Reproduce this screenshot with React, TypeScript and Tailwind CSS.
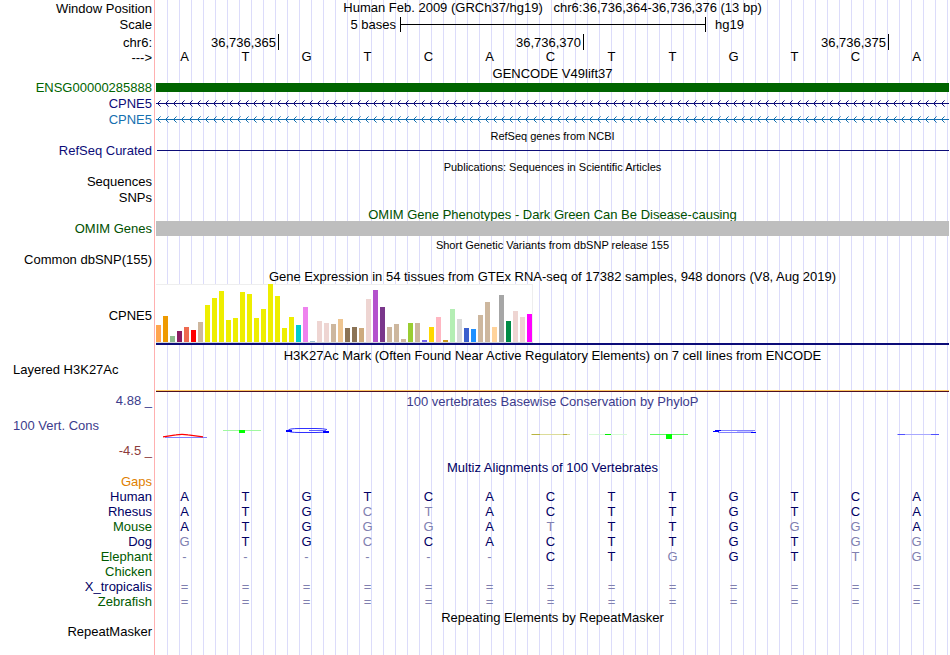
import type { ReactNode } from 'react'

type Bar = [height: number, color: string]

const SEQUENCE = 'ATGTCACTTGTCA'

// GTEx median expression per tissue, in px
const GTEX_BARS: Bar[] = [
  [17, '#ffa54f'], [26, '#ee9a00'], [6, '#8fbc8f'], [11, '#8b1c62'], [15, '#ee6a50'], [12, '#ff0000'],
  [20, '#cdb79e'], [37, '#eeee00'], [44, '#eeee00'], [51, '#eeee00'], [22, '#eeee00'], [24, '#eeee00'],
  [50, '#eeee00'], [48, '#eeee00'], [24, '#eeee00'], [33, '#eeee00'], [58, '#eeee00'], [46, '#eeee00'],
  [14, '#eeee00'], [25, '#eeee00'], [17, '#00cdcd'], [35, '#ee82ee'], [1, '#9ac0cd'], [21, '#eed5d2'],
  [19, '#eed5d2'], [18, '#cdb79e'], [23, '#eec591'], [14, '#8b7355'], [15, '#8b7355'], [14, '#cdaa7d'],
  [43, '#eed5d2'], [52, '#b452cd'], [35, '#7a378b'], [15, '#cdb79e'], [18, '#cdb79e'], [3, '#cdb79e'],
  [19, '#9acd32'], [19, '#cdb79e'], [2, '#7a67ee'], [15, '#ffd700'], [25, '#ffb6c1'], [2, '#cd9b1d'],
  [33, '#b4eeb4'], [23, '#d9d9d9'], [14, '#3a5fcd'], [13, '#1e90ff'], [27, '#cdb79e'], [40, '#cdb79e'],
  [15, '#ffd39b'], [47, '#a6a6a6'], [21, '#008b45'], [31, '#eed5d2'], [25, '#eed5d2'], [28, '#ff00ff'],
]

// lower case = differs from the human base
const ALIGNMENTS = [
  { name: 'Gaps', color: 'text-[#e08000]', bases: '' },
  { name: 'Human', color: 'text-[#000064]', bases: 'ATGTCACTTGTCA' },
  { name: 'Rhesus', color: 'text-[#000064]', bases: 'ATGctACTTGTCA' },
  { name: 'Mouse', color: 'text-[#005a00]', bases: 'ATGggAtTTGggA' },
  { name: 'Dog', color: 'text-[#000064]', bases: 'gTGcCACTTGTgg' },
  { name: 'Elephant', color: 'text-[#005a00]', bases: '------CTgGTtg' },
  { name: 'Chicken', color: 'text-[#005a00]', bases: '' },
  { name: 'X_tropicalis', color: 'text-[#000064]', bases: '=============' },
  { name: 'Zebrafish', color: 'text-[#005a00]', bases: '=============' },
]

// conservation logo glyphs, one entry per base
const LOGO: ReactNode[] = [
  <>
    <path d="M9 13.5H51" stroke="#8080ff" />
    <path d="M7 12.8L20 10.9Q26 9.8 32 10.9L47 12.8" stroke="#ff0000" strokeWidth="1.3" />
  </>,
  <>
    <path d="M6 6.5H44" stroke="#a0f8a0" />
    <path d="M22 6h6v3h-6z" fill="#00ff00" />
  </>,
  <>
    <path d="M49 5.5Q46 4.5 38 4.5H22Q10 4.5 10 6.5Q10 8.5 22 8.5H38Q46 8.5 49 7.5" stroke="#3030ff" />
    <path d="M31 6.5H48" stroke="#6060ff" />
    <path d="M8 6h6v2h-6zM45 7h6v2h-6z" fill="#0000ff" />
  </>,
  null,
  null,
  null,
  <>
    <path d="M9 10.5H48" stroke="#dcdc98" />
    <path d="M10 10.5H18M41 10.5H45" stroke="#b8b440" />
  </>,
  <>
    <path d="M6 10.5H44" stroke="#d8fad8" />
    <path d="M22 10.5H28" stroke="#00ee00" />
  </>,
  <>
    <path d="M6 10.5H44" stroke="#60f860" />
    <path d="M22 10h6v5h-6z" fill="#00ff00" />
  </>,
  <>
    <path d="M13 6.5H50M13 8.5H50" stroke="#8080ff" />
    <path d="M32 7.5H48" stroke="#c8c8ff" />
    <path d="M8 7.5H14M46 8.5H51M10 6.5H16" stroke="#0000ff" />
  </>,
  null,
  null,
  <>
    <path d="M9 10.5H51" stroke="#a8a8ff" />
    <path d="M10 10.5H17M43 10.5H51" stroke="#5050ff" />
  </>,
]

const rowClass = 'grid grid-cols-[156px_minmax(0,1fr)]'
const labelClass = 'pr-1 text-right whitespace-nowrap'

function Track({ label, color = '', children }: {
  label: string
  color?: string
  children?: ReactNode
}) {
  return (
    <div className={`${rowClass} h-4`}>
      <div className={`${labelClass} ${color}`}>{label}</div>
      <div className="flex h-[15px] items-center">{children}</div>
    </div>
  )
}

function TrackTitle({ children, className = '' }: { children: ReactNode; className?: string }) {
  return (
    <div className={rowClass}>
      <h2 className={`col-start-2 h-[15px] pt-px text-center whitespace-nowrap ${className}`}>{children}</h2>
    </div>
  )
}

// thin line with strand arrows, one every 8px
function Intron({ id, color }: { id: string; color: string }) {
  return (
    <svg className="h-[7px] w-full" fill={color} shapeRendering="crispEdges" aria-hidden="true">
      <defs>
        <pattern id={id} width="8" height="7" patternUnits="userSpaceOnUse">
          <path d="M1 3h1v1h-1zM2 2h1v1h-1zM2 4h1v1h-1zM3 1h1v1h-1zM3 5h1v1h-1z" />
          <path d="M4 0h1v1h-1zM4 6h1v1h-1z" opacity="0.6" />
        </pattern>
      </defs>
      <rect width="100%" height="7" fill={`url(#${id})`} />
      <rect y="3" width="100%" height="1" />
    </svg>
  )
}

function Ruler() {
  return (
    <>
      <div className={`${rowClass} h-[17px]`}>
        <div className={`${labelClass} pt-px`}>Window Position</div>
        <h1 className="text-center whitespace-pre">
          {'Human Feb. 2009 (GRCh37/hg19)   chr6:36,736,364-36,736,376 (13 bp)'}
        </h1>
      </div>
      <div className={`${rowClass} h-[17px]`}>
        <div className={labelClass}>Scale</div>
        <div className="grid h-[15px] grid-cols-13">
          <div className="col-span-4 pr-1 text-right">5 bases</div>
          <div className="col-span-5 flex items-center border-l border-black">
            <div className="h-px w-full bg-black" />
          </div>
          <div className="col-span-4 border-l border-black pl-[9px]">hg19</div>
        </div>
      </div>
      <div className={`${rowClass} h-[15px]`}>
        <div className={`${labelClass} pt-px`}>chr6:</div>
        <div className="grid h-[15px] grid-cols-13 text-right">
          <div className="col-span-2 pt-px pr-0.5">36,736,365</div>
          <div className="col-span-5 border-l border-black pt-px pr-0.5">36,736,370</div>
          <div className="col-span-5 border-l border-black pt-px pr-0.5">36,736,375</div>
          <div className="border-l border-black" />
        </div>
      </div>
      <div className={`${rowClass} h-4`}>
        <div className={`${labelClass} pt-px`}>{'--->'}</div>
        <div className="grid grid-cols-13 text-center">
          {SEQUENCE.split('').map((base, i) => (
            <span key={i} className="pr-1">{base}</span>
          ))}
        </div>
      </div>
    </>
  )
}

function GtexTrack() {
  return (
    <div className={`${rowClass} h-[63px] items-center`}>
      <div className={labelClass}>CPNE5</div>
      <div className="h-[63px]">
        <div className="w-fit border-b border-gray-300 bg-white">
          <div className="flex h-[58px] items-end gap-0.5 pr-px shadow-[inset_-1px_1px_#eeeeee]">
            {GTEX_BARS.map(([height, color], i) => (
              <div key={i} className="w-[5px]" style={{ height, backgroundColor: color }} />
            ))}
          </div>
        </div>
        <div className="h-0.5 bg-[#0c0c78]" />
      </div>
    </div>
  )
}

function ConservationTrack() {
  return (
    <div className={`${rowClass} h-[67px] pt-px`}>
      <div className="flex flex-col gap-2.5 text-[#3c3c8c]">
        <div className={labelClass}>4.88 _</div>
        <div className="pl-[13px]">100 Vert. Cons</div>
        <div className={`${labelClass} text-[#8c3c3c]`}>-4.5 _</div>
      </div>
      <div>
        <h2 className="pt-px text-center text-[#3c3c8c]">100 vertebrates Basewise Conservation by PhyloP</h2>
        <div className="mt-[15px] grid grid-cols-13">
          {LOGO.map((glyph, i) => (
            <svg key={i} width="61" height="16" viewBox="0 0 61 16" fill="none" aria-hidden="true">{glyph}</svg>
          ))}
        </div>
      </div>
    </div>
  )
}

function AlignmentTable() {
  return (
    <table className="w-full table-fixed border-collapse">
      <tbody>
        {ALIGNMENTS.map(({ name, color, bases }) => (
          <tr key={name} className="h-[15px]">
            <th scope="row" className={`w-[156px] p-0 pr-1 text-right font-normal ${color}`}>{name}</th>
            {bases.padEnd(13).split('').map((base, i) => (
              <td
                key={i}
                className={`p-0 pr-1 text-center ${/[A-Z]/.test(base) ? 'text-[#000064]' : 'text-[#8080b0]'}`}
              >
                {base.trim().toUpperCase()}
              </td>
            ))}
          </tr>
        ))}
      </tbody>
    </table>
  )
}

export default function App() {
  return (
    <main className="min-h-screen bg-white bg-[linear-gradient(to_right,#fff_0_154px,#ffb0b0_154px_155px,#fff_155px_156px,transparent_156px),repeating-linear-gradient(to_right,transparent_0_11px,#dcdcfa_11px_12px)] pr-px font-['Liberation_Sans',Arial,sans-serif] text-[13px] leading-[15px] text-black">
      <Ruler />

      <TrackTitle>GENCODE V49lift37</TrackTitle>
      <Track label="ENSG00000285888" color="text-[#006400]">
        <div className="h-[9px] w-full bg-[#006400]" />
      </Track>
      <Track label="CPNE5" color="text-[#0c0c78]">
        <Intron id="intron-coding" color="#0c0c78" />
      </Track>
      <Track label="CPNE5" color="text-[#1470b0]">
        <Intron id="intron-other" color="#1470b0" />
      </Track>

      <TrackTitle className="text-[11px]">RefSeq genes from NCBI</TrackTitle>
      <Track label="RefSeq Curated" color="text-[#0c0c78]">
        <div className="ml-px h-px w-full bg-[#0c0c78]" />
      </Track>

      <TrackTitle className="text-[11px]">Publications: Sequences in Scientific Articles</TrackTitle>
      <Track label="Sequences" />
      <Track label="SNPs" />

      <TrackTitle className="text-[#005000]">OMIM Gene Phenotypes - Dark Green Can Be Disease-causing</TrackTitle>
      <Track label="OMIM Genes" color="text-[#005000]">
        <div className="relative h-full w-full bg-[#bebebe]" />
      </Track>

      <TrackTitle className="text-[11px]">Short Genetic Variants from dbSNP release 155</TrackTitle>
      <Track label="Common dbSNP(155)" />

      <TrackTitle>Gene Expression in 54 tissues from GTEx RNA-seq of 17382 samples, 948 donors (V8, Aug 2019)</TrackTitle>
      <div className="pt-px">
        <GtexTrack />
      </div>

      <TrackTitle>H3K27Ac Mark (Often Found Near Active Regulatory Elements) on 7 cell lines from ENCODE</TrackTitle>
      <div className={`${rowClass} h-[30px]`}>
        <div className="pl-[13px]">Layered H3K27Ac</div>
        <div className="flex flex-col justify-end">
          <div className="h-px bg-[#ffc864]" />
          <div className="h-px bg-[#501020]" />
        </div>
      </div>

      <ConservationTrack />

      <TrackTitle className="text-[#000064]">Multiz Alignments of 100 Vertebrates</TrackTitle>
      <AlignmentTable />

      <TrackTitle>Repeating Elements by RepeatMasker</TrackTitle>
      <Track label="RepeatMasker" />
    </main>
  )
}
